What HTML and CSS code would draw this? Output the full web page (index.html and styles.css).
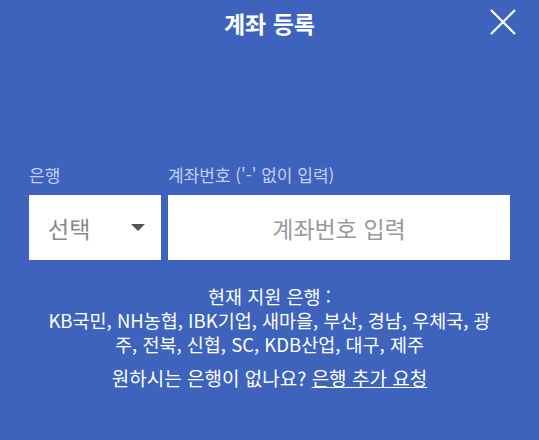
FILE: index.html
```html
<!DOCTYPE html>
<html lang="ko">
<head>
    <meta charset="UTF-8">
    <meta name="viewport" content="width=device-width, initial-scale=1.0">
    <title>계좌 등록</title>
    <link rel="stylesheet" href="styles.css">
</head>
<body>
    <div id="container">
        <div class="header">
            <h2 class="title">계좌 등록</h2>
            <button class="close" type="button">
                <svg width="28" height="28" viewBox="0 0 28 28">
                    <path d="M2 2 L26 26 M26 2 L2 26" stroke="#fff" stroke-width="2.2" fill="none"/>
                </svg>
            </button>
        </div>

        <div class="form">
            <div class="field bank">
                <label class="label">은행</label>
                <div class="select">
                    <span>선택</span>
                    <span class="arrow"></span>
                </div>
            </div>
            <div class="field account">
                <label class="label">계좌번호 ('-' 없이 입력)</label>
                <input class="input" type="text" placeholder="계좌번호 입력">
            </div>
        </div>

        <div class="info">
            <p>현재 지원 은행 :<br>KB국민, NH농협, IBK기업, 새마을, 부산, 경남, 우체국, 광주, 전북, 신협, SC, KDB산업, 대구, 제주</p>
            <p class="request">원하시는 은행이 없나요? <a href="#">은행 추가 요청</a></p>
        </div>
    </div>
</body>
</html>
```

FILE: styles.css
```css
* {
    margin: 0;
    padding: 0;
    box-sizing: border-box;
}

body {
    background-color: #3e63bd;
    font-family: "Noto Sans CJK KR", "Noto Sans", sans-serif;
    color: #fff;
}

#container {
    width: 539px;
    height: 440px;
}

.header {
    position: relative;
    height: 46px;
    text-align: center;
}

.header .title {
    font-size: 23px;
    font-weight: bold;
    line-height: 46px;
}

.close {
    position: absolute;
    top: 8px;
    right: 22px;
    background: none;
    border: none;
}

.form {
    display: flex;
    gap: 7px;
    margin-top: 117px;
    padding: 0 29px;
}

.label {
    display: block;
    font-size: 17px;
    line-height: 24px;
    color: #c2cfef;
    margin-bottom: 8px;
}

.bank {
    width: 132px;
}

.account {
    flex: 1;
}

.select,
.input {
    height: 65px;
    background-color: #fff;
    border: none;
}

.select {
    display: flex;
    align-items: center;
    justify-content: space-between;
    padding: 0 16px 0 19px;
    font-size: 23px;
    color: #888;
}

.arrow {
    width: 0;
    height: 0;
    border-left: 7px solid transparent;
    border-right: 7px solid transparent;
    border-top: 7px solid #555;
}

.input {
    width: 100%;
    font-family: inherit;
    font-size: 23px;
    text-align: center;
    outline: none;
}

.input::placeholder {
    color: #999;
}

.info {
    margin-top: 24px;
    padding: 0 44px;
    text-align: center;
    font-size: 18.5px;
    line-height: 24px;
}

.request {
    margin-top: 10px;
    font-size: 19px;
}

.request a {
    color: #fff;
    text-decoration: underline;
}
```
